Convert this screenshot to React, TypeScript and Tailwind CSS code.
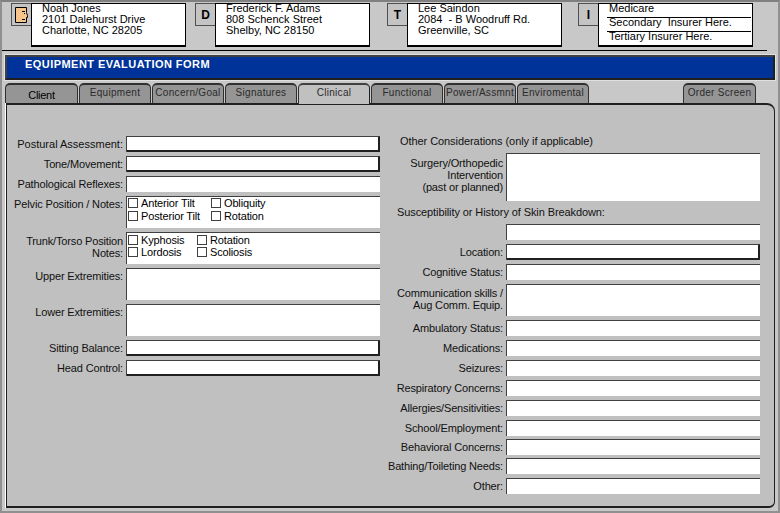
const ui = { fontFamily: '"Liberation Sans", Arial, sans-serif' };

const Field = ({ h = "h-[16px]", raised = false }: { h?: string; raised?: boolean }) =>
  raised ? (
    <div className={`${h} w-[254px] bg-white border border-[#404040] border-r-2 border-b-2 border-r-[#202020] border-b-[#202020] rounded-[1px] shrink-0`} />
  ) : (
    <div className={`${h} w-[254px] bg-white border-t border-l border-[#404040] shrink-0`} />
  );

const Check = ({ label, w }: { label: string; w: string }) => (
  <div className={`flex items-center gap-[3px] ${w} h-[12px] shrink-0`}>
    <span className="w-[10px] h-[10px] border border-[#404040] bg-white shrink-0" />
    <span className="text-[11px] leading-[12px] tracking-[-0.15px] text-black">{label}</span>
  </div>
);

const Row = ({ label, children, lw, mb, pt = "pt-[2px]" }: { label: React.ReactNode; children: React.ReactNode; lw: string; mb: string; pt?: string }) => (
  <div className={`flex ${mb}`}>
    <div className={`${lw} shrink-0 pr-[3px] text-right text-[11px] leading-[12px] tracking-[-0.15px] text-[#111] whitespace-nowrap ${pt}`}>{label}</div>
    {children}
  </div>
);

const Face = () => (
  <svg width="15" height="18" viewBox="0 0 15 18" className="block">
    <path d="M1.5 1.5H12.5V6.5L13.5 9.5V11.5H12.5V16.5H1.5Z" fill="#f7c48c" stroke="#000" />
    <path d="M8 5.5H11M10 7.5H11M8 13.5H11" stroke="#000" fill="none" />
  </svg>
);

const Button = ({ children }: { children: React.ReactNode }) => (
  <div className="w-[20px] h-[23px] shrink-0 bg-[#c4c4c4] border border-[#505050] border-r-0 flex items-center justify-center text-[12px] font-bold text-black">
    {children}
  </div>
);

const Card = ({ btn, lines, ml }: { btn: React.ReactNode; lines: string[]; ml: string }) => (
  <div className={`flex shrink-0 ${ml}`}>
    <Button>{btn}</Button>
    <div className="w-[155px] h-[44px] bg-white border border-black border-b-2 overflow-hidden pl-[10px] text-[11px] leading-[11px] text-black">
      <div className="-mt-[1px]">
        {lines.map((l) => (
          <div key={l} className="whitespace-pre">{l}</div>
        ))}
      </div>
    </div>
  </div>
);

const InsuranceCard = () => (
  <div className="flex shrink-0 ml-[16px]">
    <Button>I</Button>
    <div className="w-[155px] h-[44px] bg-white border border-black border-b-2 overflow-hidden text-[11px] leading-[8px] text-black">
      <div className="h-[14px] ml-[8px] mr-[1px] pl-[2px] border-b border-black whitespace-pre">Medicare</div>
      <div className="h-[14px] ml-[8px] mr-[1px] pl-[2px] border-b border-black whitespace-pre">Secondary  Insurer Here.</div>
      <div className="h-[13px] ml-[8px] mr-[1px] pl-[2px] whitespace-pre">Tertiary Insurer Here.</div>
    </div>
  </div>
);

const Tab = ({ label, w, active, client }: { label: string; w: string; active?: boolean; client?: boolean }) => (
  <div
    className={`${w} shrink-0 mr-[1px] rounded-t-[5px] border-t-2 border-l border-r border-[#303030] flex justify-center overflow-hidden whitespace-nowrap ${
      active ? "bg-[#c0c0c0] h-[21px] border-b-0 z-10 border-t-[#404040] border-r-[#202020]" : "bg-[#959595] h-[20px]"
    } ${client ? "text-[11px] tracking-[-0.3px] leading-[20px] text-black" : "text-[10px] tracking-[0.3px] leading-[15px] text-[#2a2a2a]"}`}
  >
    {label}
  </div>
);

const rightLower: [string, string][] = [
  ["Ambulatory Status:", "mb-[4px]"],
  ["Medications:", "mb-[4px]"],
  ["Seizures:", "mb-[4px]"],
  ["Respiratory Concerns:", "mb-[4px]"],
  ["Allergies/Sensitivities:", "mb-[4px]"],
  ["School/Employment:", "mb-[3px]"],
  ["Behavioral Concerns:", "mb-[3px]"],
  ["Bathing/Toileting Needs:", "mb-[4px]"],
  ["Other:", ""],
];

export default function App() {
  return (
    <div className="w-[780px] h-[513px] bg-[#c8c8c8] overflow-hidden border-2 border-t-[#808080] border-l-[#909090] border-r-[#909090] border-b-[#909090]" style={ui}>
      {/* contact cards */}
      <div className="pt-[1px] h-[49px] mr-[11px] border-b border-black">
        <div className="flex">
          <Card btn={<Face />} ml="ml-[9px]" lines={["Noah Jones", "2101 Dalehurst Drive", "Charlotte, NC 28205"]} />
          <Card btn="D" ml="ml-[9px]" lines={["Frederick F. Adams", "808 Schenck Street", "Shelby, NC 28150"]} />
          <Card btn="T" ml="ml-[17px]" lines={["Lee Saindon", "2084  - B Woodruff Rd.", "Greenville, SC"]} />
          <InsuranceCard />
        </div>
      </div>

      {/* title bar */}
      <div className="ml-[3px] mt-[4px] w-[770px] h-[25px] bg-[#003399] border-2 border-t-[#404040] border-l-[#404040] border-r-[#202020] border-b-[#202020] outline outline-1 outline-[#e0e0e0] text-white text-[11px] font-bold leading-[14px] pl-[18px] tracking-[0.45px]">
        EQUIPMENT EVALUATION FORM
      </div>

      {/* tabs */}
      <div className="flex mt-[3px] ml-[3px] h-[20px] relative">
        <Tab label="Client" w="w-[73px]" client />
        <Tab label="Equipment" w="w-[72px]" />
        <Tab label="Concern/Goal" w="w-[72px]" />
        <Tab label="Signatures" w="w-[72px]" />
        <Tab label="Clinical" w="w-[72px]" active />
        <Tab label="Functional" w="w-[72px]" />
        <Tab label="Power/Assmnt" w="w-[72px]" />
        <Tab label="Enviromental" w="w-[72px]" />
        <div className="w-[93px]" />
        <Tab label="Order Screen" w="w-[73px]" />
      </div>

      {/* panel */}
      <div className="ml-[4px] w-[769px] h-[405px] bg-[#c0c0c0] border border-t-2 border-b-2 border-[#202020] shadow-[-1px_0_0_#ffffff] rounded-tr-[8px] rounded-br-[6px] flex">
        {/* left column */}
        <div className="w-[373px] shrink-0 pt-[31px]">
          <Row lw="w-[119px]" label={<span className="tracking-[0px]">Postural Assessment:</span>} mb="mb-[4px]"><Field raised /></Row>
          <Row lw="w-[119px]" label="Tone/Movement:" mb="mb-[4px]"><Field raised /></Row>
          <Row lw="w-[119px]" label="Pathological Reflexes:" mb="mb-[4px]"><Field /></Row>
          <Row lw="w-[119px]" label="Pelvic Position / Notes:" mb="mb-[4px]">
            <div className="w-[254px] h-[32px] bg-white border-t border-l border-[#404040] pl-[1px] shrink-0">
              <div className="flex mb-[1px]"><Check label="Anterior Tilt" w="w-[83px]" /><Check label="Obliquity" w="w-[60px]" /></div>
              <div className="flex"><Check label="Posterior Tilt" w="w-[83px]" /><Check label="Rotation" w="w-[60px]" /></div>
            </div>
          </Row>
          <Row lw="w-[119px]" label={<>Trunk/Torso Position<br />Notes:</>} mb="mb-[4px]" pt="pt-[3px]">
            <div className="w-[254px] h-[32px] bg-white border-t border-l border-[#404040] pl-[1px] pt-[1px] shrink-0">
              <div className="flex"><Check label="Kyphosis" w="w-[69px]" /><Check label="Rotation" w="w-[60px]" /></div>
              <div className="flex"><Check label="Lordosis" w="w-[69px]" /><Check label="Scoliosis" w="w-[60px]" /></div>
            </div>
          </Row>
          <Row lw="w-[119px]" label="Upper Extremities:" mb="mb-[4px]"><Field h="h-[32px]" /></Row>
          <Row lw="w-[119px]" label="Lower Extremities:" mb="mb-[4px]"><Field h="h-[32px]" /></Row>
          <Row lw="w-[119px]" label="Sitting Balance:" mb="mb-[4px]"><Field raised /></Row>
          <Row lw="w-[119px]" label="Head Control:" mb=""><Field raised /></Row>
        </div>

        {/* right column */}
        <div className="w-[380px] shrink-0 pt-[30px] text-[11px] text-[#111]">
          <div className="pl-[20px] leading-[12px] mb-[6px] tracking-[-0.07px] whitespace-nowrap">Other Considerations (only if applicable)</div>
          <div className="flex mb-[5px]">
            <div className="w-[126px] shrink-0 pr-[3px] text-right leading-[12px] tracking-[-0.15px] pt-[4px]">Surgery/Orthopedic<br />Intervention<br />(past or planned)</div>
            <Field h="h-[48px]" />
          </div>
          <div className="pl-[17px] leading-[12px] mb-[6px] tracking-[-0.1px] whitespace-nowrap">Susceptibility or History of Skin Breakdown:</div>
          <div className="ml-[126px] mb-[4px]"><Field /></div>
          <Row lw="w-[126px]" label="Location:" mb="mb-[4px]"><Field raised /></Row>
          <Row lw="w-[126px]" label="Cognitive Status:" mb="mb-[4px]"><Field /></Row>
          <Row lw="w-[126px]" label={<>Communication skills /<br />Aug Comm. Equip.</>} mb="mb-[4px]" pt="pt-[3px]"><Field h="h-[32px]" /></Row>
          {rightLower.map(([l, m]) => (
            <Row key={l} lw="w-[126px]" label={l} mb={m}><Field /></Row>
          ))}
        </div>
      </div>
    </div>
  );
}
